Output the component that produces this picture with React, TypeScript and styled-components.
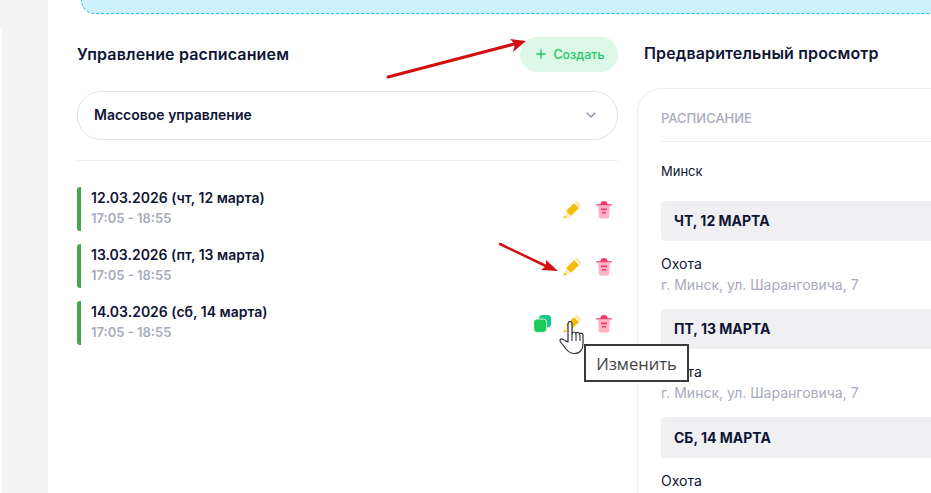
import React from 'react'
import styled, { createGlobalStyle } from 'styled-components'
import { ChevronDown, Plus } from 'lucide-react'

const GlobalStyle = createGlobalStyle`
  html, body {
    margin: 0;
    padding: 0;
    background: #fff;
    font-family: Inter, "Noto Sans", sans-serif;
    color: #0f1535;
  }
`

const schedule = [
  { date: '12.03.2026 (чт, 12 марта)', time: '17:05 - 18:55', canCopy: false },
  { date: '13.03.2026 (пт, 13 марта)', time: '17:05 - 18:55', canCopy: false },
  { date: '14.03.2026 (сб, 14 марта)', time: '17:05 - 18:55', canCopy: true },
]

const preview = [
  { day: 'ЧТ, 12 МАРТА', height: 40, place: 'Охота', address: 'г. Минск, ул. Шаранговича, 7' },
  { day: 'ПТ, 13 МАРТА', height: 40, place: 'Охота', address: 'г. Минск, ул. Шаранговича, 7' },
  { day: 'СБ, 14 МАРТА', height: 41, place: 'Охота', address: 'г. Минск, ул. Шаранговича, 7' },
]

const PencilIcon = () => (
  <svg width="18" height="18" viewBox="0 0 18 18">
    <path d="M3 10 11 2 16 7 8 15Z" fill="#f6bd0a" />
    <path d="M11.800 1.200 12.500.5c.6-.6 1.500-.6 2.100 0l2.900 2.900c.6.6.6 1.500 0 2.100l-.7.7Z" fill="#fde6a6" />
    <path d="M2.400 10.800 7.200 15.600 2.800 17Z" fill="#fde6a6" />
    <path d="M1.300 14.200 3.800 16.700.4 17.600Z" fill="#f6bd0a" />
  </svg>
)

const TrashIcon = () => (
  <svg width="16" height="18" viewBox="0 0 16 18">
    <path d="M2.200 5h11.600l-.6 10.700c-.1 1.100-1 1.800-2 1.800H4.800c-1 0-1.900-.7-2-1.800Z" fill="#ffb3c4" />
    <path d="M4.400 3.200 5.200 1C5.400.4 5.700.2 6.200.2h3.600c.5 0 .8.2 1 .8l.8 2.200h3.900c.3 0 .5.200.5.600s-.2.600-.5.600H.5C.2 4.400 0 4.200 0 3.800s.2-.6.500-.6Z" fill="#f5376b" />
    <rect x="5" y="7.600" width="6" height="1.600" rx=".5" fill="#f5376b" />
    <rect x="6" y="11" width="4" height="1.600" rx=".5" fill="#f5376b" />
  </svg>
)

const CopyIcon = () => (
  <CopySvg width="17" height="18" viewBox="0 0 17 18">
    <rect x="5" y="0" width="12" height="12.500" rx="3.500" fill="#14c98a" />
    <rect x="-.4" y="4" width="13" height="13.400" rx="3.500" fill="#1cc95b" stroke="#fff" strokeWidth=".8" />
  </CopySvg>
)

const HandCursor = () => (
  <svg width="27" height="34" viewBox="0 0 27 34">
    <path
      d="M9 21V3c0-1.500.8-2.500 2-2.500s2 1 2 2.500v10c.3-1.300 1-2 2-2s1.700.8 1.800 2c.2-1 1-1.600 1.900-1.600s1.700.8 1.800 2c.3-.8 1-1.200 1.700-1.200 1.100 0 1.800 1 1.800 2.500v8.300c0 5.500-3 9.500-8.500 9.500-4 0-6.200-1.500-8.500-4.500L1.600 21c-.8-1-.8-2.200 0-2.800.9-.7 2.100-.4 3 .5Z"
      fill="#fff"
      stroke="#2b2f3c"
      strokeWidth="1.200"
      strokeLinejoin="round"
    />
    <path d="M13 13v7M17 13v7M21 14v6" stroke="#2b2f3c" strokeWidth="1.100" fill="none" />
  </svg>
)

const App: React.FC = () => (
  <Screen>
    <GlobalStyle />
    <SideGutter>
      <GutterNotch />
    </SideGutter>
    <Main>
      <Banner />
      <Columns>
        <ManageColumn>
          <HeaderRow>
            <Title>Управление расписанием</Title>
            <CreateButton>
              <Plus size={14} strokeWidth={2.4} />
              Создать
            </CreateButton>
          </HeaderRow>
          <SelectBox>
            Массовое управление
            <ChevronDown size={16} color="#8d92ad" />
          </SelectBox>
          <Divider />
          <ScheduleList>
            {schedule.map((item) => (
              <ScheduleItem key={item.date}>
                <div>
                  <ItemDate>{item.date}</ItemDate>
                  <ItemTime>{item.time}</ItemTime>
                </div>
                <Actions>
                  {item.canCopy && <CopyIcon />}
                  <PencilIcon />
                  <TrashIcon />
                </Actions>
              </ScheduleItem>
            ))}
          </ScheduleList>
        </ManageColumn>
        <PreviewColumn>
          <PreviewTitle>Предварительный просмотр</PreviewTitle>
          <PreviewCard>
            <CardLabel>РАСПИСАНИЕ</CardLabel>
            <City>Минск</City>
            {preview.map((row) => (
              <React.Fragment key={row.day}>
                <DayBand $height={row.height}>{row.day}</DayBand>
                <Place>{row.place}</Place>
                <Address>{row.address}</Address>
              </React.Fragment>
            ))}
          </PreviewCard>
        </PreviewColumn>
      </Columns>
    </Main>

    <Annotations width="931" height="493" viewBox="0 0 931 493">
      <path d="M388 77 518 43" stroke="#d30f12" strokeWidth="3" strokeLinecap="round" />
      <path d="M526 41 510 39 515 44 513 52Z" fill="#d30f12" />
      <path d="M500 244 548 267" stroke="#d30f12" strokeWidth="2.500" strokeLinecap="round" />
      <path d="M558 271 546 260 546 266 541 270Z" fill="#d30f12" />
    </Annotations>
    <CursorSpot>
      <HandCursor />
    </CursorSpot>
    <Tooltip>Изменить</Tooltip>
  </Screen>
)

const Screen = styled.div`
  position: relative;
  display: flex;
  width: 931px;
  height: 493px;
  overflow: hidden;
  background: #fff;
`

const SideGutter = styled.div`
  position: relative;
  flex: 0 0 48px;
  background: #f3f3f3;
`

const GutterNotch = styled.div`
  position: absolute;
  left: 0;
  top: 28px;
  bottom: 0;
  width: 2px;
  background: #fff;
  border-top-right-radius: 4px;
`

const Main = styled.div`
  flex: 1;
  min-width: 0;
  padding-left: 29px;
`

const Banner = styled.div`
  height: 13px;
  margin-left: 4px;
  margin-right: -20px;
  background: #ccf1ff;
  border-bottom: 1px dashed #35b6e6;
  border-left: 1px dashed #35b6e6;
  border-bottom-left-radius: 14px;
`

const Columns = styled.div`
  display: flex;
  gap: 19px;
  margin-top: 23px;
`

const ManageColumn = styled.div`
  flex: 0 0 541px;
`

const HeaderRow = styled.div`
  display: flex;
  align-items: center;
  justify-content: space-between;
  height: 35px;
`

const Title = styled.h2`
  margin: 0;
  padding-bottom: 2px;
  font-size: 16px;
  font-weight: 600;
  letter-spacing: 0.14px;
  color: #0f1535;
`

const CreateButton = styled.div`
  display: flex;
  align-items: center;
  justify-content: center;
  gap: 6px;
  box-sizing: border-box;
  width: 98px;
  height: 35px;
  padding-bottom: 1px;
  border-radius: 18px;
  background: #dcf8e6;
  color: #1fc76a;
  font-size: 12.400px;
  font-weight: 500;
`

const SelectBox = styled.div`
  display: flex;
  align-items: center;
  justify-content: space-between;
  box-sizing: border-box;
  height: 49px;
  margin-top: 19px;
  padding: 0 18px 2px 16px;
  border: 1px solid #e0e0ea;
  border-radius: 24px;
  font-size: 14px;
  font-weight: 600;
  color: #0f1535;
`

const Divider = styled.div`
  height: 1px;
  margin-top: 20px;
  background: #efeff3;
`

const ScheduleList = styled.div`
  display: flex;
  flex-direction: column;
  gap: 13px;
  margin-top: 26px;
`

const ScheduleItem = styled.div`
  display: flex;
  align-items: flex-start;
  justify-content: space-between;
  box-sizing: border-box;
  height: 44px;
  padding: 0 6px 0 10px;
  border-left: 4px solid #47a44f;
  border-radius: 3px;
`

const ItemDate = styled.div`
  padding-top: 1px;
  font-size: 14px;
  font-weight: 600;
  line-height: 20px;
  color: #0f1535;
`

const ItemTime = styled.div`
  margin-top: 1px;
  font-size: 13px;
  font-weight: 600;
  line-height: 18px;
  color: #a9aac0;
`

const Actions = styled.div`
  display: flex;
  align-items: center;
  gap: 15px;
  margin-top: 14px;
`

const CopySvg = styled.svg`
  margin-right: -3px;
`

const PreviewColumn = styled.div`
  flex: 0 0 400px;
`

const PreviewTitle = styled.h2`
  margin: 0;
  height: 35px;
  padding-left: 7px;
  font-size: 16px;
  font-weight: 600;
  letter-spacing: 0.14px;
  line-height: 33px;
  color: #0f1535;
`

const PreviewCard = styled.div`
  margin-top: 16px;
  padding: 0 0 0 23px;
  border: 1px solid #efeff3;
  border-radius: 24px 0 0 0;
`

const CardLabel = styled.div`
  height: 52px;
  border-bottom: 1px solid #efeff3;
  font-size: 13px;
  font-weight: 500;
  line-height: 58px;
  color: #a9aac0;
`

const City = styled.div`
  margin-top: 19px;
  font-size: 13px;
  line-height: 20px;
  color: #0f1535;
`

const DayBand = styled.div<{ $height: number }>`
  display: flex;
  align-items: center;
  height: ${(p) => p.$height}px;
  margin-top: 20px;
  padding: 0 0 1px 13px;
  box-sizing: border-box;
  border-radius: 4px;
  background: #f0f0f3;
  font-size: 14px;
  font-weight: 700;
  color: #0f1535;

  & ~ & {
    margin-top: 14px;
  }
`

const Place = styled.div`
  margin-top: 13px;
  font-size: 14px;
  line-height: 20px;
  color: #0f1535;
`

const Address = styled.div`
  margin-top: 1px;
  font-size: 14px;
  line-height: 20px;
  color: #a9aac0;
`

const Annotations = styled.svg`
  position: absolute;
  left: 0;
  top: 0;
  pointer-events: none;
`

const CursorSpot = styled.div`
  position: absolute;
  left: 559px;
  top: 321px;
  line-height: 0;
`

const Tooltip = styled.div`
  position: absolute;
  left: 584px;
  top: 344px;
  box-sizing: border-box;
  width: 105px;
  height: 38px;
  border: 2px solid #3a3a3a;
  background: #fff;
  font-family: "Open Sans", sans-serif;
  font-size: 16.500px;
  line-height: 36px;
  text-align: center;
  color: #444;
`

export default App
